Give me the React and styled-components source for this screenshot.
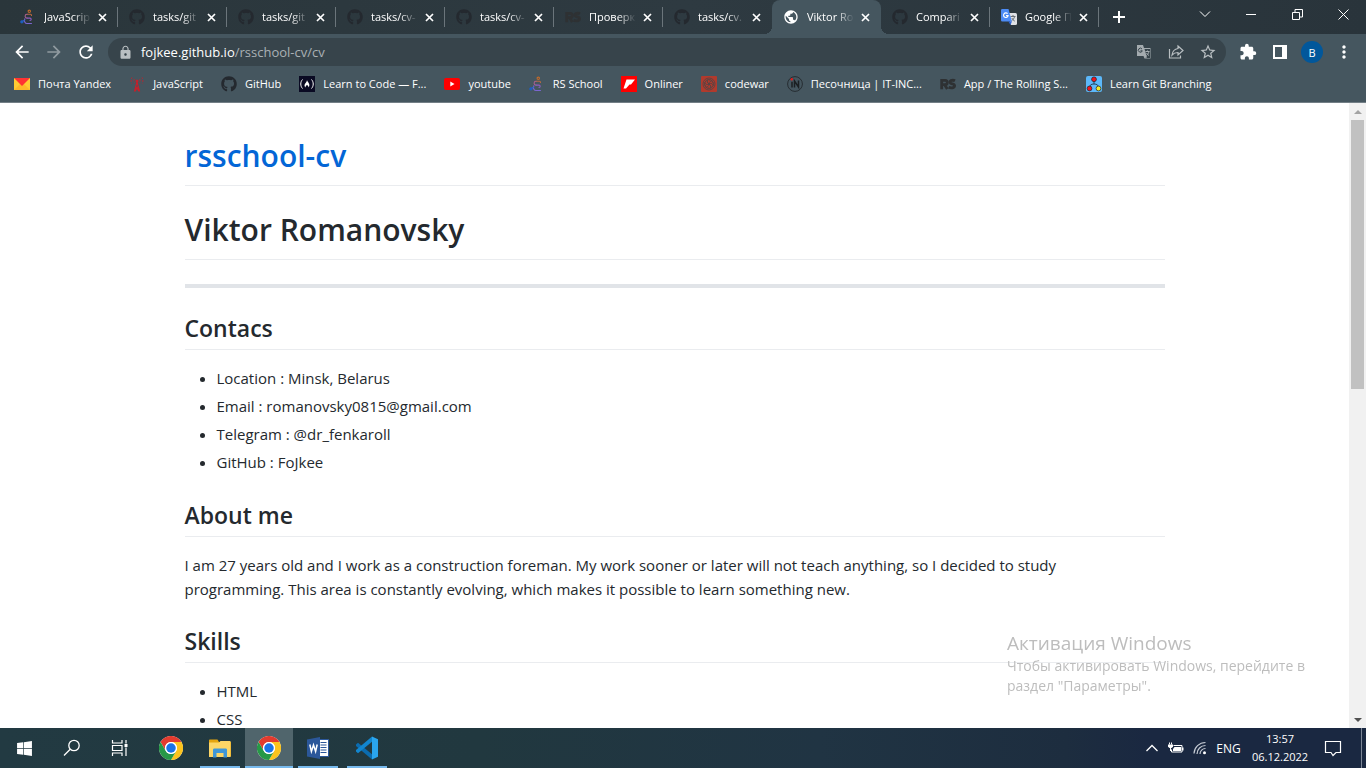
import React from "react";
import styled, { createGlobalStyle, css } from "styled-components";
import { FaGithub, FaWindows } from "react-icons/fa";
import {
  MdArrowBack, MdArrowForward, MdRefresh, MdLock, MdStarBorder, MdExtension,
  MdPublic, MdMoreVert,
} from "react-icons/md";

const Global = createGlobalStyle`
  *, *::before, *::after { box-sizing: border-box; }
  body { margin: 0; font-family: "Open Sans", "Noto Sans", sans-serif; background: #fff; }
  button { font: inherit; color: inherit; border: 0; padding: 0; background: none; cursor: pointer; }
  svg { display: block; flex: none; }
`;

const Desktop = styled.div`
  height: 100vh;
  display: flex;
  flex-direction: column;
  overflow: hidden;
`;

/* ---------- tab strip ---------- */
const TabStrip = styled.header`
  flex: none;
  height: 34px;
  display: flex;
  padding-left: 9px;
  background: linear-gradient(100deg, #2a363b, #2e3a41 50%, #29343b);
  color: #fff;
  font-size: 11px;
`;
const Tab = styled.div`
  position: relative;
  width: 109px;
  display: flex;
  align-items: center;
  padding-left: 11px;
  ${(p) => p.$line && css`
    background: linear-gradient(#6b757b, #6b757b) right center / 1px 20px no-repeat;
  `}
  ${(p) => p.$active && css`
    background: #45565f;
    border-radius: 8px 8px 0 0;
    &::before, &::after {
      content: "";
      position: absolute;
      bottom: 0;
      width: 8px;
      height: 8px;
    }
    &::before { left: -8px; background: radial-gradient(circle at 0 0, transparent 8px, #45565f 8px); }
    &::after { right: -8px; background: radial-gradient(circle at 100% 0, transparent 8px, #45565f 8px); }
  `}
`;
const TabTitle = styled.span`
  width: 48px;
  margin-left: 8px;
  overflow: hidden;
  white-space: nowrap;
  line-height: 20px;
  mask-image: linear-gradient(90deg, #000 60%, transparent 98%);
`;
const TabClose = styled.button`
  width: 16px;
  height: 16px;
  margin-left: 2px;
  display: grid;
  place-items: center;
`;
const NewTab = styled.button`
  width: 28px;
  margin-left: 6px;
  display: grid;
  place-items: center;
`;
const WindowButtons = styled.div`
  margin-left: auto;
  display: flex;
  height: 28px;
`;
const WindowButton = styled.button`
  width: 46px;
  display: grid;
  place-items: center;
`;

/* ---------- toolbar ---------- */
const Toolbar = styled.div`
  flex: none;
  height: 36px;
  display: flex;
  align-items: center;
  background: #45565f;
  color: #fff;
  padding: 0 6px;
`;
const ToolButton = styled.button`
  width: 32px;
  height: 28px;
  display: grid;
  place-items: center;
  opacity: ${(p) => (p.$dim ? 0.4 : 1)};
`;
const Omnibox = styled.div`
  flex: 1;
  height: 28px;
  margin: 0 6px;
  padding: 0 2px 0 10px;
  border-radius: 14px;
  display: flex;
  align-items: center;
  background: #37444b;
  color: #b9bfc2;
  font-size: 13px;
`;
const Address = styled.a`
  flex: 1;
  margin-left: 8px;
  color: #aab1b5;
  text-decoration: none;
  line-height: 20px;
  b { font-weight: 400; color: #fff; }
`;
const Avatar = styled.span`
  width: 22px;
  height: 22px;
  border-radius: 50%;
  display: grid;
  place-items: center;
  background: #01579b;
  font-size: 11px;
`;

/* ---------- bookmarks ---------- */
const Bookmarks = styled.nav`
  flex: none;
  height: 33px;
  display: flex;
  gap: 18px;
  padding: 0 14px 4px;
  align-items: center;
  background: #45565f;
  border-bottom: 1px solid #737f86;
  color: #fff;
  font-size: 11px;
`;
const Bookmark = styled.a`
  display: flex;
  align-items: center;
  gap: 8px;
  color: inherit;
  text-decoration: none;
  white-space: nowrap;
  line-height: 20px;
`;

/* ---------- page ---------- */
const Viewport = styled.div`
  flex: 1;
  min-height: 0;
  display: flex;
`;
const PageArea = styled.div`
  flex: 1;
  overflow: hidden;
  background: #fff;
`;
const Article = styled.main`
  max-width: 1012px;
  margin: 32px auto;
  padding: 0 16px;
  color: #24292e;
  font-size: 15px;
  line-height: 24px;
`;
const Title = styled.h1`
  margin: 0 0 23px;
  padding-bottom: 8px;
  border-bottom: 1px solid #eaecef;
  font-size: 30px;
  line-height: 42px;
  font-weight: 600;
  a { color: #0366d6; text-decoration: none; }
`;
const Rule = styled.hr`
  height: 4px;
  margin: 24px 0;
  border: 0;
  background: #e1e4e8;
`;
const Heading = styled.h2`
  margin: 24px 0 16px;
  padding-bottom: 5px;
  border-bottom: 1px solid #eaecef;
  font-size: 23px;
  line-height: 32px;
  font-weight: 600;
`;
const List = styled.ul`
  margin: 0 0 25px;
  padding-left: 32px;
  li + li { margin-top: 4px; }
`;
const Paragraph = styled.p`
  margin: 0;
  padding-right: 24px;
`;
const Scrollbar = styled.div`
  flex: none;
  width: 17px;
  display: flex;
  flex-direction: column;
  align-items: center;
  background: #f1f1f1;
`;
const ScrollArrow = styled.button`
  width: 17px;
  height: 17px;
  display: grid;
  place-items: center;
  color: ${(p) => (p.$off ? "#a3a3a3" : "#505050")};
`;
const Track = styled.div`
  flex: 1;
  width: 13px;
`;
const Thumb = styled.div`
  height: calc(100% * 5 / 11);
  background: #c1c1c1;
`;

/* ---------- activation notice ---------- */
const Notice = styled.aside`
  position: fixed;
  right: 47px;
  bottom: 72px;
  width: 312px;
  color: #bdbdbd;
  pointer-events: none;
  font-size: 14px;
  line-height: 20px;
  strong { display: block; font-size: 19px; line-height: 26px; font-weight: 400; }
`;

/* ---------- taskbar ---------- */
const Taskbar = styled.footer`
  flex: none;
  height: 40px;
  display: flex;
  align-items: stretch;
  background: linear-gradient(90deg, #223a42, #21383f 35%, #203443 60%, #1d2d3f 78%, #1a2841 84%, #1a2841);
  color: #fff;
  font-size: 12px;
`;
const TaskButton = styled.button`
  width: 48px;
  display: grid;
  place-items: center;
`;
const Apps = styled.div`
  display: flex;
  gap: 1px;
  margin-left: 3px;
`;
const AppButton = styled(TaskButton)`
  background: ${(p) =>
    p.$active
      ? "linear-gradient(#76b9ed, #76b9ed) center bottom / 48px 2px no-repeat, #50656c"
      : p.$open
        ? "linear-gradient(#76b9ed, #76b9ed) center bottom / 40px 2px no-repeat"
        : "none"};
`;
const Tray = styled.div`
  margin-left: auto;
  display: flex;
  align-items: center;
`;
const TrayButton = styled.button`
  width: ${(p) => p.$w || 24}px;
  height: 40px;
  display: grid;
  place-items: center;
`;
const Clock = styled.time`
  width: 70px;
  text-align: center;
  font-size: 11px;
  line-height: 18px;
  span { display: block; }
`;
const ShowDesktop = styled.button`
  width: 5px;
  height: 40px;
  margin-left: 10px;
  border-left: 1px solid #7c8696;
`;

/* ---------- icons ---------- */
const Svg = ({ s = 16, h, v, children, ...r }) => (
  <svg width={s} height={h || s} viewBox={v || `0 0 ${s} ${h || s}`} fill="none" aria-hidden="true" {...r}>{children}</svg>
);
const Snake = () => (
  <Svg strokeWidth="1.1" strokeLinecap="round">
    <circle cx="9.300" cy="2.300" r="1.200" stroke="#c06a2a" />
    <path d="M7 5.300h3.500a1.200 1.200 0 0 1 1 1.200" stroke="#b8693f" />
    <path d="M7 5.300a1.900 1.900 0 0 0 0 3.800" stroke="#a7608f" />
    <path d="M7 9.100h3a1.200 1.200 0 0 1 0 2.400" stroke="#8e5cc0" />
    <path d="M4.800 9.800c-1 3 .5 4.700 2.200 4.700h4.500" stroke="#7b66cf" />
    <circle cx="1.900" cy="12.800" r="1.100" fill="#1d5fc0" stroke="#1d5fc0" />
    <path d="M3 12l1.300-.8" stroke="#2f60c6" />
  </Svg>
);
const Git = () => <FaGithub size={16} color="#24292f" aria-hidden="true" />;
const Rs = () => (
  <Svg>
    <g stroke="#2e3133" strokeWidth="2.800">
      <path d="M1.700 13.300V4.400h3.500a2 2 0 0 1 0 4.200H2M4.400 8.600L7.300 13" />
      <path d="M15 4.800c-1.500-.8-5-.9-5 1.200 0 2.400 4.600 1.400 4.600 3.800 0 2.400-4 2.400-6 1.400" />
    </g>
  </Svg>
);
const Translate = () => (
  <Svg>
    <path d="M7 4h7.500a1.500 1.500 0 0 1 1.500 1.500v9a1.500 1.500 0 0 1-1.500 1.500H10z" fill="#dfe1e5" />
    <path d="M9.500 7.500h5M12 6v1.500M13.600 7.600c-.5 2-1.600 3.200-3.200 4.400M10.800 9c.7 1.400 1.600 2.300 3 3.200" stroke="#6b7176" strokeWidth="1" />
    <path d="M1.300 0h6.200l3.400 12.500H1.300A1.300 1.300 0 0 1 0 11.200V1.300A1.300 1.300 0 0 1 1.300 0z" fill="#4c8bf5" />
    <path d="M7.400 12.500h3.500L9.500 16z" fill="#3367d6" />
    <path d="M6.600 4.700a2.300 2.300 0 1 0 .5 1.900H5" stroke="#fff" strokeWidth="1.100" />
  </Svg>
);
const Cross = () => <Svg s={9} stroke="#fff" strokeWidth="1.700"><path d="M1 1l7 7M8 1L1 8" /></Svg>;
const Mail = () => (
  <Svg><path d="M0 2h16v12H0z" fill="#fc3" /><path d="M0 14l6-6h4l6 6z" fill="#fdb92a" /><path d="M0 2h16L8 10z" fill="#f33" /></Svg>
);
const Tower = () => (
  <Svg stroke="#c4202b">
    <path d="M4.800 15.500L7.300 6h1.400l2.500 9.500H9.300L8 13l-1.300 2.500z" fill="#c4202b" stroke="none" />
    <path d="M6.800 11.300L9.200 9M9.200 11.300L6.800 9" stroke="#45565f" strokeWidth=".6" />
    <circle cx="8" cy="5" r="1.500" fill="#c4202b" stroke="none" />
    <path d="M5.300 3a3.500 3.500 0 0 0 0 3.600M10.700 3a3.500 3.500 0 0 1 0 3.600M3 1.500a6.500 6.500 0 0 0-.3 6M13 1.500a6.500 6.500 0 0 1 .3 6" strokeDasharray="1.600 1.200" />
  </Svg>
);
const Fcc = () => (
  <Svg><path d="M0 0h16v16H0z" fill="#0a0a23" />
    <path d="M3.500 3.500c-2.300 2.500-2.300 6.500 0 9M12.500 3.500c2.300 2.500 2.300 6.500 0 9" stroke="#fff" />
    <path d="M8 4c.5 2.200 2.800 3.200 2.300 5.800C10 11 9.500 11.500 9.500 11.500c0-1-.5-2-1.500-2.500-1 .5-1.500 1.500-1.500 2.500C4.500 9.500 6 7.500 7 6.500 7.600 5.800 8 5 8 4z" fill="#fff" />
  </Svg>
);
const Tube = () => <Svg><rect y="2" width="16" height="12" rx="2" fill="#f00" /><path d="M6.300 5.500v5l4.200-2.500z" fill="#fff" /></Svg>;
const Onliner = () => <Svg><path d="M0 0h16v16H0z" fill="#f00" /><path d="M5.500 3.500H14L10 8.500H8.500L5 12.500H2.500z" fill="#fff" /></Svg>;
const Codewars = () => (
  <Svg><rect width="16" height="16" rx="1" fill="#b13a2c" />
    <g stroke="#4a4547" strokeWidth=".8"><circle cx="8" cy="8" r="6" />
      {[0, 60, 120, 180, 240, 300].map((a) => <path key={a} d="M8 8c0-2 1.500-3.500 3.500-3M9 4c-2-.8-4 0-4.500 1.500" transform={`rotate(${a} 8 8)`} />)}
    </g>
  </Svg>
);
const Incubator = () => (
  <Svg><circle cx="8" cy="8" r="7.400" stroke="#22282c" strokeWidth=".9" /><path d="M5 5.800V11.500M7.500 11.500V5l4 6V4.500" stroke="#1b1f22" strokeWidth="1.500" /><circle cx="4.800" cy="3.300" r="1.200" fill="#e21b1b" /></Svg>
);
const Branching = () => (
  <Svg><rect width="16" height="16" rx="2" fill="#5cb8fa" />
    <path d="M8 4v4M3.500 12c0-3 1.500-4 4.500-4s4.500 1 4.500 4" stroke="#24465c" />
    <g stroke="#222" strokeWidth=".7"><circle cx="8" cy="3.300" r="2.400" fill="#f0141e" /><circle cx="3.500" cy="12.500" r="2.400" fill="#f0141e" /><circle cx="12.500" cy="12.500" r="2.400" fill="#f2ea2a" /></g>
  </Svg>
);
const Chrome = () => (
  <Svg s={24} v="0 0 48 48">
    <circle cx="24" cy="24" r="24" fill="#fff" />
    <path d="M24 12h20.800A24 24 0 0 0 3.200 12l10.400 18A12 12 0 0 1 24 12z" fill="#e33b2e" />
    <path d="M34.400 30L24 48A24 24 0 0 0 44.800 12H24a12 12 0 0 1 10.400 18z" fill="#fcc31e" />
    <path d="M13.600 30L3.200 12A24 24 0 0 0 24 48l10.400-18a12 12 0 0 1-20.800 0z" fill="#279847" />
    <circle cx="24" cy="24" r="12" fill="#fff" /><circle cx="24" cy="24" r="9.500" fill="#1a73e8" />
  </Svg>
);
const Explorer = () => (
  <Svg s={22} h={19}>
    <path d="M0 1.500C0 .8.500.500 1 .500h7.500L10 3H22v14.500H0z" fill="#e5a50f" />
    <path d="M0 3.500h10L11.500 2H21.500v16H0z" fill="#fcd667" />
    <path d="M4 18.500v-7.500c0-1 .5-1.500 1.500-1.500h11c1 0 1.500.5 1.500 1.500v7.500h-3.500V14h-7v4.500z" fill="#3f97d8" />
  </Svg>
);
const Word = () => (
  <Svg s={22} h={22}>
    <path d="M12 2.500h9.500v17H12z" fill="#fff" stroke="#2b579a" />
    <path d="M13.500 5.500h6M13.500 8h6M13.500 10.500h6M13.500 13h6M13.500 15.500h6" stroke="#2b579a" strokeWidth="1.200" />
    <path d="M0 2.500L13 0v22L0 19.500z" fill="#2b579a" />
    <path d="M2.800 7.500l1.600 7 2.100-6.500 2.100 6.500 1.600-7" stroke="#fff" strokeWidth="1.500" />
  </Svg>
);
const Code = () => (
  <Svg s={24}>
    <path d="M1 8.500L3 6.800l14 11.400V23.500L1 10z" fill="#0b6cb0" />
    <path d="M1 15.500L3 17.200l14-11.400V.500L1 14z" fill="#1286cf" />
    <path d="M17 .500l6 2.700V20.800l-6 2.700z" fill="#2aa5ee" />
  </Svg>
);
const Globe = () => <MdPublic size={16} aria-hidden="true" />;

const TABS = [
  { t: "JavaScrip", i: Snake }, { t: "tasks/git", i: Git }, { t: "tasks/git", i: Git },
  { t: "tasks/cv-", i: Git }, { t: "tasks/cv-", i: Git }, { t: "Проверк", i: Rs },
  { t: "tasks/cv.", i: Git }, { t: "Viktor Ro", i: Globe, active: true },
  { t: "Compari", i: Git }, { t: "Google П", i: Translate },
];
const BOOKMARKS = [
  ["Почта Yandex", Mail], ["JavaScript", Tower], ["GitHub", Git], ["Learn to Code — F...", Fcc],
  ["youtube", Tube], ["RS School", Snake], ["Onliner", Onliner], ["codewar", Codewars],
  ["Песочница | IT-INC...", Incubator], ["App / The Rolling S...", Rs], ["Learn Git Branching", Branching],
];

function BrowserTop() {
  return (
    <>
      <TabStrip>
        {TABS.map(({ t, i: Icon, active }, n) => (
          <Tab key={n} $active={active} $line={!active && n !== 6}>
            <Icon />
            <TabTitle>{t}</TabTitle>
            <TabClose aria-label="Close tab"><Cross /></TabClose>
          </Tab>
        ))}
        <NewTab aria-label="New tab"><Svg s={12} stroke="#fff" strokeWidth="2"><path d="M6 0v12M0 6h12" /></Svg></NewTab>
        <WindowButtons>
          <WindowButton aria-label="Search tabs"><Svg s={12} stroke="#fff"><path d="M1 3.500l5 5 5-5" /></Svg></WindowButton>
          <WindowButton aria-label="Minimize"><Svg s={10} stroke="#fff"><path d="M0 5.500h10" /></Svg></WindowButton>
          <WindowButton aria-label="Restore"><Svg s={11} stroke="#fff"><path d="M.5 3.500h7v7h-7zM3 3.500v-3h7.500V8H7.500" /></Svg></WindowButton>
          <WindowButton aria-label="Close"><Svg s={11} stroke="#fff"><path d="M.5.5l10 10M10.500.500l-10 10" /></Svg></WindowButton>
        </WindowButtons>
      </TabStrip>
      <Toolbar>
        <ToolButton aria-label="Back"><MdArrowBack size={20} /></ToolButton>
        <ToolButton aria-label="Forward" $dim><MdArrowForward size={20} /></ToolButton>
        <ToolButton aria-label="Reload"><MdRefresh size={20} /></ToolButton>
        <Omnibox>
          <MdLock size={15} aria-hidden="true" />
          <Address href="#page"><b>fojkee.github.io</b>/rsschool-cv/cv</Address>
          <ToolButton aria-label="Translate">
            <Svg>
              <path d="M1 1h6l1 3h6.500v10.500H8.500L7.500 12H1z" fill="#a4abaf" />
              <path d="M8.500 5l2.500 8.500L9 14h5V5z" fill="#37444b" />
              <path d="M9.500 7.500h4M11.500 6.500v1M13 7.500c-.5 2-1.500 3-2.500 4M10.500 9c.5 1 1.500 2 2.500 2.500" stroke="#a4abaf" />
              <path d="M6 5a2 2 0 1 0 .3 1.800H4.500" stroke="#37444b" />
            </Svg>
          </ToolButton>
          <ToolButton aria-label="Share">
            <Svg stroke="#b9bfc2" strokeWidth="1.200"><path d="M1.500 5v9h11v-2.500M10 2l5 4.500L10 11V8.500c-3 0-4.500.8-6 2.500.5-3.500 2.500-6 6-6.500z" /></Svg>
          </ToolButton>
          <ToolButton aria-label="Bookmark this page"><MdStarBorder size={18} /></ToolButton>
        </Omnibox>
        <ToolButton aria-label="Extensions"><MdExtension size={18} /></ToolButton>
        <ToolButton aria-label="Side panel"><Svg s={14}><path d="M1 1h12v12H1z" stroke="#fff" strokeWidth="2" /><path d="M9 1h4v12H9z" fill="#fff" /></Svg></ToolButton>
        <ToolButton aria-label="Profile"><Avatar>B</Avatar></ToolButton>
        <ToolButton aria-label="Menu"><MdMoreVert size={20} /></ToolButton>
      </Toolbar>
      <Bookmarks aria-label="Bookmarks">
        {BOOKMARKS.map(([t, Icon]) => <Bookmark key={t} href="#page"><Icon />{t}</Bookmark>)}
      </Bookmarks>
    </>
  );
}

function CvPage() {
  return (
    <Article id="page">
      <Title><a href="#page">rsschool-cv</a></Title>
      <Title>Viktor Romanovsky</Title>
      <Rule />
      <Heading>Contacs</Heading>
      <List>
        <li>Location : Minsk, Belarus</li>
        <li>Email : romanovsky0815@gmail.com</li>
        <li>Telegram : @dr_fenkaroll</li>
        <li>GitHub : FoJkee</li>
      </List>
      <Heading>About me</Heading>
      <Paragraph>
        I am 27 years old and I work as a construction foreman. My work sooner or later will not teach anything, so I decided to study programming. This area is constantly evolving, which makes it possible to learn something new.
      </Paragraph>
      <Heading>Skills</Heading>
      <List>
        <li>HTML</li>
        <li>CSS</li>
      </List>
    </Article>
  );
}

function WindowsTaskbar() {
  return (
    <Taskbar>
      <TaskButton aria-label="Start"><FaWindows size={17} /></TaskButton>
      <TaskButton aria-label="Search"><Svg s={18} stroke="#fff" strokeWidth="1.300"><circle cx="11" cy="6.500" r="5.200" /><path d="M7.200 10.300L1 16.500" /></Svg></TaskButton>
      <TaskButton aria-label="Task view">
        <Svg s={18} stroke="#fff" strokeWidth="1.200"><path d="M1.500 1v3h9.500V1M1.500 17v-3h9.500v3M1.500 6.500h9.500v5H1.500zM15 1v3.500M15 8.500V17" /><path d="M13.500 5h3v3h-3z" fill="#fff" stroke="none" /></Svg>
      </TaskButton>
      <Apps>
        <AppButton aria-label="Google Chrome"><Chrome /></AppButton>
        <AppButton aria-label="File Explorer" $open><Explorer /></AppButton>
        <AppButton aria-label="Google Chrome window" $active><Chrome /></AppButton>
        <AppButton aria-label="Word" $open><Word /></AppButton>
        <AppButton aria-label="Visual Studio Code" $open><Code /></AppButton>
      </Apps>
      <Tray>
        <TrayButton aria-label="Hidden icons"><Svg s={12} stroke="#fff" strokeWidth="1.300"><path d="M.5 9L6 3.500 11.500 9" /></Svg></TrayButton>
        <TrayButton aria-label="Battery">
          <Svg s={16} h={12}><path d="M5.500 3.500h8.500v6.500H3.500V7.500" stroke="#fff" /><path d="M6.500 5h6.500v4H5V7z" fill="#fff" /><path d="M14 5.500h1.500v3H14zM0 2.500h5v2.200L3.500 6h-2L0 4.700z" fill="#fff" /><path d="M1.500.5v2M3.500.5v2M2.500 6v3" stroke="#fff" /></Svg>
        </TrayButton>
        <TrayButton aria-label="Network">
          <Svg s={14} stroke="#c5cbd4" strokeWidth="1.200"><path d="M1 12.500A11.500 11.500 0 0 1 12.500 1.500M4 13A8.500 8.500 0 0 1 12.500 4.500M7 13A5.500 5.500 0 0 1 12.500 7.500" /><circle cx="11.500" cy="11.800" r="1.500" fill="#fff" stroke="none" /></Svg>
        </TrayButton>
        <TrayButton aria-label="Input language" $w={33}>ENG</TrayButton>
        <Clock><span>13:57</span><span>06.12.2022</span></Clock>
        <TrayButton aria-label="Notifications" $w={36}>
          <Svg s={18} stroke="#fff" strokeWidth="1.200"><path d="M1.500 2.500h15v11H12L9 16.500l-2-3H1.500z" /></Svg>
        </TrayButton>
        <ShowDesktop aria-label="Show desktop" />
      </Tray>
    </Taskbar>
  );
}

export default function App() {
  return (
    <Desktop>
      <Global />
      <BrowserTop />
      <Viewport>
        <PageArea><CvPage /></PageArea>
        <Scrollbar>
          <ScrollArrow aria-label="Scroll up" $off><Svg s={8} h={4}><path d="M0 4l4-4 4 4z" fill="currentColor" /></Svg></ScrollArrow>
          <Track><Thumb /></Track>
          <ScrollArrow aria-label="Scroll down"><Svg s={8} h={4}><path d="M0 0l4 4 4-4z" fill="currentColor" /></Svg></ScrollArrow>
        </Scrollbar>
      </Viewport>
      <Notice>
        <strong>Активация Windows</strong>
        Чтобы активировать Windows, перейдите в раздел "Параметры".
      </Notice>
      <WindowsTaskbar />
    </Desktop>
  );
}
